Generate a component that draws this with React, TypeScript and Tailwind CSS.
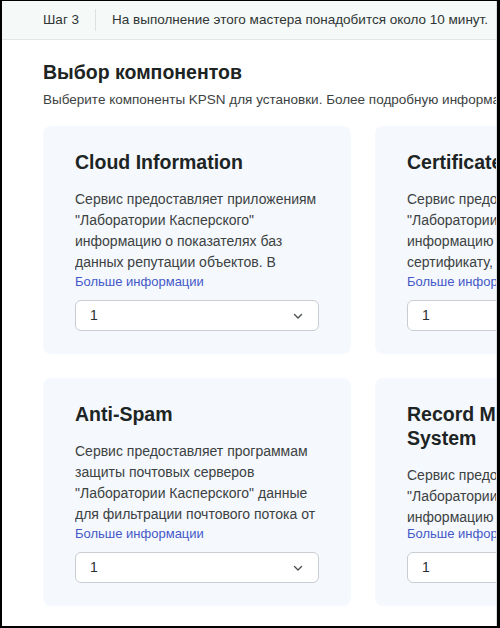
import React from "react";

type CardData = {
  title: string;
  desc: string;
};

const cards: CardData[] = [
  {
    title: "Cloud Information",
    desc: 'Сервис предоставляет приложениям "Лаборатории Касперского" информацию о показателях баз данных репутации объектов. В частности, о репутации файлов и веб-адресов.',
  },
  {
    title: "Certificate Information",
    desc: 'Сервис предоставляет приложениям "Лаборатории Касперского" информацию о доверии к сертификату, используемому для подписи файлов.',
  },
  {
    title: "Anti-Spam",
    desc: 'Сервис предоставляет программам защиты почтовых серверов "Лаборатории Касперского" данные для фильтрации почтового потока от спама.',
  },
  {
    title: "Record Management System",
    desc: 'Сервис предоставляет приложениям "Лаборатории Касперского" информацию о записях в базах данных репутации.',
  },
];

function Chevron() {
  return (
    <svg width="12" height="12" viewBox="0 0 12 12" fill="none">
      <path d="M2.5 4.5 L6 8 L9.5 4.5" stroke="#4b5050" strokeWidth="1.4" strokeLinecap="round" strokeLinejoin="round" />
    </svg>
  );
}

function Card({ data }: { data: CardData }) {
  return (
    <div className="flex h-[228px] w-[308px] flex-col rounded-lg bg-[#f5f8fd] px-8 pb-[23px] pt-6">
      <h2 className="text-[19.5px] font-bold leading-6 text-[#1d2424]">{data.title}</h2>
      <div className="mt-[15px] min-h-0 flex-1 overflow-hidden">
        <p className="text-[14px] leading-[21px] text-[#3c4242]">{data.desc}</p>
      </div>
      <a className="block text-[13px] leading-[18px] text-[#4358c8]">Больше информации</a>
      <div className="mt-[9px] flex h-[31px] shrink-0 items-center justify-between rounded-md border border-[#c9cdd1] bg-white pl-[14px] pr-[14px]">
        <span className="text-[14px] text-[#2a2f2f]">1</span>
        <Chevron />
      </div>
    </div>
  );
}

export default function App() {
  return (
    <div
      className="h-[628px] w-[500px] overflow-hidden border-b-2 border-l-2 border-r-[3px] border-t border-black bg-white"
      style={{ fontFamily: '"Liberation Sans", Arial, sans-serif' }}
    >
      <div className="h-full w-full overflow-hidden border-r border-[#d9dcdc]">
        <div className="flex h-[39px] items-center whitespace-nowrap border-b border-[#e3e6e4] bg-[#f5f9f7] pl-[41px]">
          <span className="shrink-0 text-[13.5px] text-[#2f3535]">Шаг 3</span>
          <div className="mx-4 h-[22px] w-px shrink-0 bg-[#dde1df]" />
          <span className="shrink-0 text-[13.5px] text-[#2f3535]">
            На выполнение этого мастера понадобится около 10 минут.
          </span>
        </div>
        <div className="pl-[41px] pt-[18px]">
          <h1 className="text-[19.5px] font-bold leading-7 text-[#1d2424]">Выбор компонентов</h1>
          <p className="mt-1 whitespace-nowrap text-[13.5px] leading-5 text-[#3c4242]">
            Выберите компоненты KPSN для установки. Более подробную информацию о компонентах можно найти в документации.
          </p>
          <div className="mt-4 grid w-max grid-cols-[308px_308px] gap-6">
            {cards.map((c) => (
              <Card key={c.title} data={c} />
            ))}
          </div>
        </div>
      </div>
    </div>
  );
}
